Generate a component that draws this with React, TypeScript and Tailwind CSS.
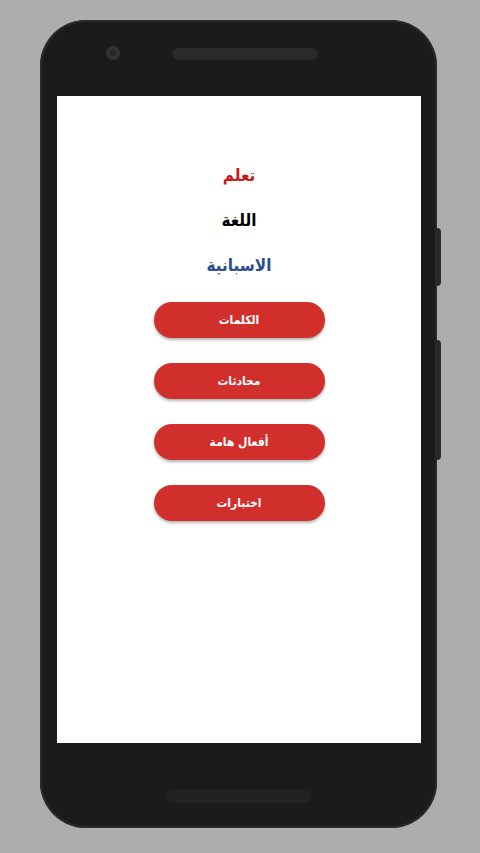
import React from "react";

const buttons = ["الكلمات", "محادثات", "أفعال هامة", "اختبارات"];

export default function App() {
  return (
    <div className="min-h-[853px] w-[480px] bg-[#adadad] pt-[20px] pl-[40px] overflow-hidden">
      <div className="relative w-[397px] h-[808px] rounded-[46px] bg-[#1b1b1b] shadow-[inset_0_0_0_2px_#2a2a2a] flex flex-col">
        {/* side buttons */}
        <div className="absolute right-[-4px] top-[208px] w-[4px] h-[58px] bg-[#2a2a2a] rounded-r-sm" />
        <div className="absolute right-[-4px] top-[320px] w-[4px] h-[120px] bg-[#2a2a2a] rounded-r-sm" />
        {/* top bezel */}
        <div className="h-[76px] relative flex items-start">
          <div className="ml-[66px] mt-[26px] w-[14px] h-[14px] rounded-full bg-[#333] flex items-center justify-center">
            <div className="w-[6px] h-[6px] rounded-full bg-[#262626]" />
          </div>
          <div className="ml-[52px] mt-[28px] w-[146px] h-[12px] rounded-full bg-[#2a2a2a]" />
        </div>
        {/* screen */}
        <div
          dir="rtl"
          className="ml-[17px] w-[364px] h-[647px] bg-white flex flex-col items-center pt-[66px]"
          style={{ fontFamily: '"DejaVu Sans Condensed", "DejaVu Sans", sans-serif' }}
        >
          <div className="text-[17px] font-bold leading-[26px] text-[#c8181c]">تعلم</div>
          <div className="mt-[19px] text-[17px] font-bold leading-[26px] text-black">اللغة</div>
          <div className="mt-[19px] text-[17px] font-bold leading-[26px] text-[#2c4e8e]">الاسبانية</div>
          <div className="mt-[24px] flex flex-col gap-[25px]">
            {buttons.map((b) => (
              <div
                key={b}
                className="w-[171px] h-[36px] rounded-full bg-[#d12f2c] shadow-[0_2px_3px_rgba(0,0,0,0.3)] flex items-center justify-center text-white text-[12px] font-bold"
              >
                {b}
              </div>
            ))}
          </div>
        </div>
        {/* bottom bezel */}
        <div className="flex-1 flex justify-center pt-[47px]">
          <div className="w-[146px] h-[13px] rounded-full bg-[#222]" />
        </div>
      </div>
    </div>
  );
}
